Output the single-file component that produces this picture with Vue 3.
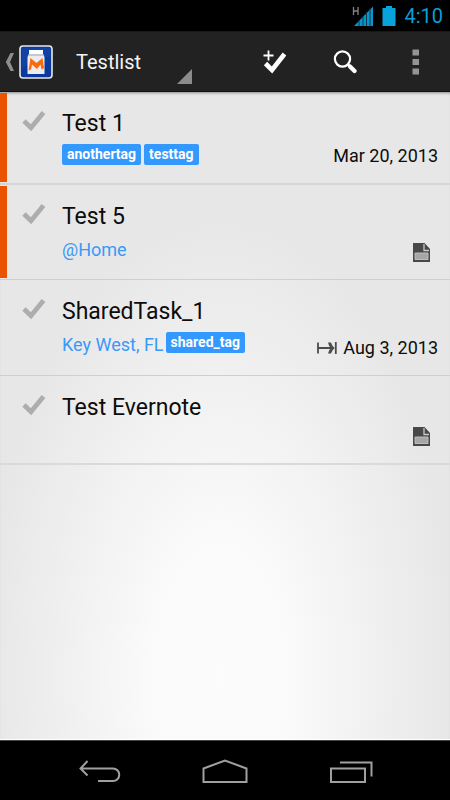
<script setup>
const tasks = [
  { id: 1, title: 'Test 1', flagged: true, tags: ['anothertag', 'testtag'], date: 'Mar 20, 2013', size: 'short' },
  { id: 2, title: 'Test 5', flagged: true, place: '@Home', tags: [], note: true, size: 'medium' },
  { id: 3, title: 'SharedTask_1', place: 'Key West, FL', tags: ['shared_tag'], date: 'Aug 3, 2013', due: true, size: 'full' },
  { id: 4, title: 'Test Evernote', tags: [], note: true, size: 'plain' },
]
</script>

<template>
  <div class="screen">
    <div class="status">
      <svg class="signal" width="22" height="22" viewBox="0 0 22 22" aria-hidden="true">
        <path d="M1.5 2v8M6 2v8M1.5 6H6" fill="none" stroke="#858585" stroke-width="1.300" />
        <path d="M2 21L21 1.500v19.500z" fill="#0b94c9" />
        <path d="M7 15v6M11 11v10M14.500 7v14M18 3.500v17.500" stroke="#043a50" stroke-width="1" />
      </svg>
      <svg class="battery" width="14" height="20" viewBox="0 0 14 20" aria-hidden="true">
        <path d="M4 0h6v2h3.500v18H.5V2H4z" fill="#09a3db" />
      </svg>
      <span class="clock">4:10</span>
    </div>

    <header class="bar">
      <button class="up" aria-label="Navigate up">
        <svg width="9" height="20" viewBox="0 0 9 20" aria-hidden="true">
          <path d="M5.500 1H9L5 10l4 9H5.500L.8 10z" fill="#8e8e8e" />
        </svg>
        <svg width="34" height="34" viewBox="0 0 34 34" aria-hidden="true">
          <rect x="1" y="1" width="32" height="32" rx="3" fill="#0b3a9c" stroke="#e9e9ec" stroke-width="1.600" />
          <path d="M2.500 2.500h29v9q-15 2-29 12z" fill="#1847a8" opacity=".6" />
          <path d="M10 5h14v4l1.500 3v17h-17V12L10 9z" fill="#ececf0" />
          <path d="M10 5h14v4H10z" fill="#fff" />
          <path d="M10 9h14l1 2H9z" fill="#c3c8d4" />
          <path d="M9.500 25.500L11.500 13l6 5 6-5 1.500 10-2.500 1.500-1-5-3.500 4.500-5-4.500-1 5z" fill="#fb6a0b" />
        </svg>
      </button>
      <button class="picker">
        <span>Testlist</span>
        <svg width="15" height="15" viewBox="0 0 15 15" aria-hidden="true">
          <path d="M15 0v15H0z" fill="#8c8c8c" />
        </svg>
      </button>
      <div class="actions">
        <button aria-label="Add task">
          <svg width="24" height="24" viewBox="0 0 24 24" aria-hidden="true">
            <path d="M2.500 13.500l6.500 6.500L21.500 4" fill="none" stroke="#fff" stroke-width="4.600" />
            <path d="M5.500 1v9.500M.5 5.500h10" stroke="#222" stroke-width="4" />
            <path d="M5.500 .5v10M.5 5.500h10" stroke="#fff" stroke-width="1.800" />
          </svg>
        </button>
        <button aria-label="Search">
          <svg width="24" height="24" viewBox="0 0 24 24" aria-hidden="true">
            <circle cx="9.500" cy="9" r="7.600" fill="none" stroke="#fff" stroke-width="2.200" />
            <path d="M14.500 14l2 2" stroke="#fff" stroke-width="2.500" />
            <path d="M17 16.500l4.500 4.500" stroke="#fff" stroke-width="4.200" stroke-linecap="round" />
          </svg>
        </button>
        <button aria-label="More options">
          <svg width="7" height="26" viewBox="0 0 7 26" aria-hidden="true">
            <path d="M.5 .5h6.500v6H.5zM.5 10H7v6H.5zM.5 19.500H7v6H.5z" fill="#949494" />
          </svg>
        </button>
      </div>
    </header>

    <main class="content">
      <ul class="list">
        <li v-for="task in tasks" :key="task.id" class="row" :class="[task.size, { flagged: task.flagged }]">
          <button class="check" :aria-label="'Complete ' + task.title">
            <svg width="24" height="22" viewBox="0 0 24 22" aria-hidden="true">
              <path d="M2 11l7 6.800L21.500 2.500" fill="none" stroke="#adadad" stroke-width="4.800" />
            </svg>
          </button>
          <div class="body">
            <h2>{{ task.title }}</h2>
            <div v-if="task.place || task.tags.length" class="details">
              <span v-if="task.place" class="place">{{ task.place }}</span>
              <span v-for="tag in task.tags" :key="tag" class="tag">{{ tag }}</span>
            </div>
          </div>
          <div class="meta">
            <svg v-if="task.due" width="20" height="14" viewBox="0 0 20 14" aria-hidden="true">
              <path d="M1 1.500v11M18.800 1v12M1 7h13" fill="none" stroke="#4c4c4c" stroke-width="1.800" />
              <path d="M11 1.500h3Q15 5 17.800 7 15 9 14 12.500h-3Q11.500 9 14 7 11.500 5 11 1.500z" fill="#4c4c4c" />
            </svg>
            <time v-if="task.date">{{ task.date }}</time>
            <svg v-if="task.note" class="note" width="17" height="19" viewBox="0 0 17 19" aria-hidden="true">
              <path d="M0 0h11.500L17 6v13H0z" fill="#484848" />
              <path d="M11 1v6.500h5" fill="none" stroke="#c9c9c9" stroke-width="1.300" />
              <path d="M2 10h13v6.500H2z" fill="#a6a6a6" stroke="#bcbcbc" stroke-width="1" />
            </svg>
          </div>
        </li>
      </ul>
    </main>

    <nav class="nav">
      <button aria-label="Back">
        <svg width="44" height="26" viewBox="0 0 44 26" aria-hidden="true">
          <path d="M10.500 2L3.500 9.500l7 7M4 9.500h32a6 6 0 0 1 0 12.500H21" fill="none" stroke="#a0a0a0" stroke-width="2" />
        </svg>
      </button>
      <button aria-label="Home">
        <svg width="46" height="26" viewBox="0 0 46 26" aria-hidden="true">
          <path d="M1.500 23V9.500L23 1.500l21.500 8V23z" fill="none" stroke="#a0a0a0" stroke-width="2" />
        </svg>
      </button>
      <button aria-label="Recent apps">
        <svg width="44" height="26" viewBox="0 0 44 26" aria-hidden="true">
          <path d="M2 9.500h34V23H2zM11 3.500h31.500v14" fill="none" stroke="#a0a0a0" stroke-width="2" />
        </svg>
      </button>
    </nav>
  </div>
</template>

<style>
body {
  background: #000;
}
</style>

<style scoped>
.screen {
  display: flex;
  flex-direction: column;
  min-height: 100vh;
  font-family: Roboto, "Liberation Sans", sans-serif;
  color: #0c0c0c;
}

button {
  display: flex;
  align-items: center;
  justify-content: center;
  margin: 0;
  padding: 0;
  border: 0;
  background: none;
  color: inherit;
  font: inherit;
}

svg {
  display: block;
  flex: none;
}

.status {
  display: flex;
  align-items: center;
  justify-content: flex-end;
  height: 31px;
  padding-right: 7px;
  background: #000;
}

.battery {
  margin: 0 8px;
}

.clock {
  color: #0a9fd8;
  font-size: 20px;
  line-height: 24px;
}

.bar {
  display: flex;
  box-sizing: border-box;
  height: 61px;
  padding-top: 1px;
  border-top: 1px solid #181818;
  border-bottom: 1px solid #111;
  background: #222;
  color: #f4f4f4;
}

.up {
  gap: 5px;
  padding-left: 5px;
}

.picker {
  gap: 36px;
  padding-left: 23px;
  font-size: 20px;
  line-height: 24px;
}

.picker svg {
  align-self: flex-end;
  margin-bottom: 7px;
}

.actions {
  display: flex;
  margin-left: auto;
}

.actions button {
  width: 70px;
}

.content {
  flex: 1;
  border-bottom: 1px solid #fff;
  background: radial-gradient(ellipse 235px 460px at 49% 90%, #fcfcfc 0, #fafafa 30%, #e7e7e7 100%);
  box-shadow: inset 0 3px 3px -2px #888;
}

.list {
  margin: 0;
  padding: 0;
  list-style: none;
}

.row {
  display: flex;
  box-sizing: border-box;
  height: 96px;
  padding: 1px 12px 1px 7px;
  border-bottom: 1px solid #cfcfcf;
}

.row.short {
  height: 93px;
  border-bottom: 2px solid #d6d6d6;
}

.row.medium {
  height: 95px;
}

.row.plain {
  height: 89px;
  border-bottom: 2px solid #dadada;
}

.row.flagged {
  padding-left: 0;
}

.row.flagged::before {
  content: "";
  width: 7px;
  background: #ea5400;
}

.check {
  align-self: flex-start;
  width: 54px;
  margin-right: 1px;
  padding-top: 17px;
}

.body {
  flex: 1;
  min-width: 0;
}

h2 {
  margin: 0;
  padding-top: 17px;
  font-size: 23px;
  font-weight: 400;
  line-height: 28px;
}

.details {
  display: flex;
  align-items: flex-start;
  gap: 2px;
  padding-top: 6px;
}

.place {
  padding-top: 3px;
  color: #3a99f7;
  font-size: 18px;
  line-height: 20px;
}

.tag {
  padding: 0 5px;
  border-radius: 2px;
  background: #3399ff;
  color: #fff;
  font-size: 14px;
  font-weight: 700;
  line-height: 21px;
}

.tag + .tag {
  margin-left: 1px;
}

.meta {
  display: flex;
  align-items: center;
  align-self: flex-end;
  gap: 6px;
  padding-bottom: 16px;
  font-size: 18px;
  line-height: 20px;
}

.note {
  margin-right: 8px;
}

.nav {
  display: flex;
  box-sizing: border-box;
  justify-content: center;
  gap: 16px;
  height: 60px;
  padding-top: 3px;
  border-top: 1px solid #444;
  background: #000;
}

.nav button {
  width: 110px;
}
</style>
